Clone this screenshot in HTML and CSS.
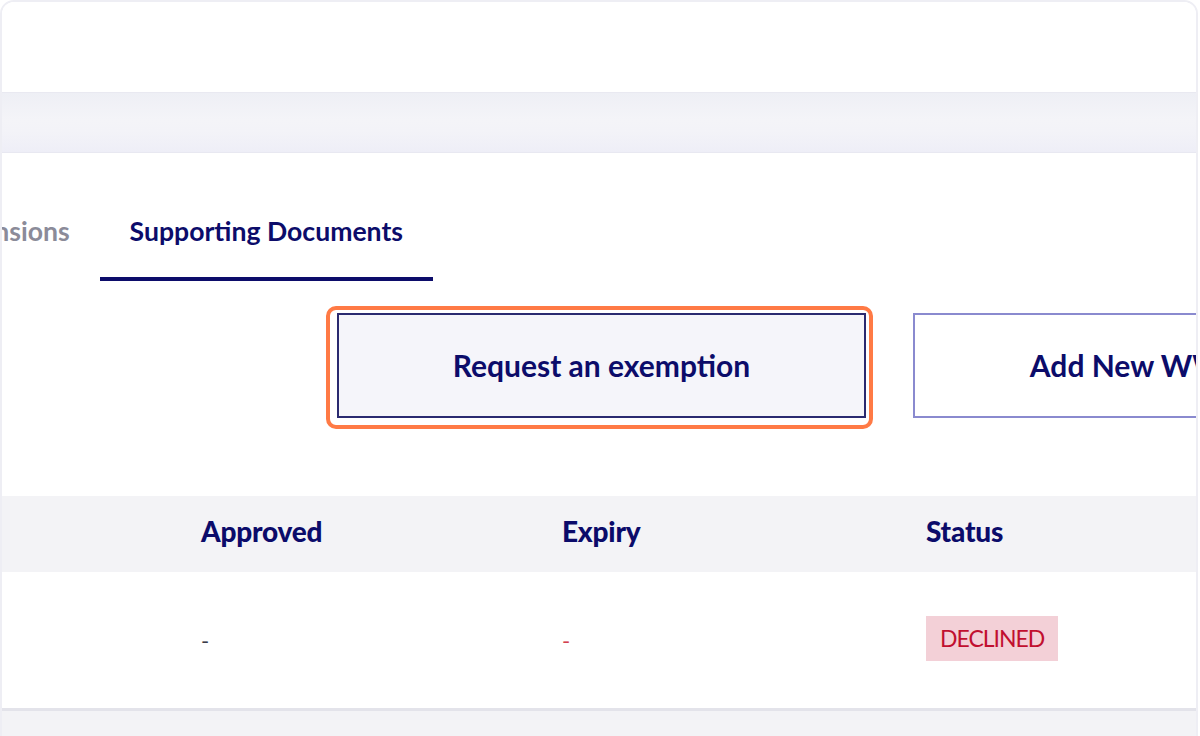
FILE: index.html
```html
<!DOCTYPE html>
<html lang="en">
<head>
<meta charset="utf-8">
<title>Supporting Documents</title>
<link rel="stylesheet" href="styles.css">
</head>
<body>
<div class="frame">
  <div class="topbar"></div>
  <div class="band"></div>
  <div class="content">
    <nav class="tabs">
      <div class="tab">Extensions</div>
      <div class="tab tab-active">Supporting Documents</div>
    </nav>
    <div class="actions">
      <div class="highlight">
        <button class="btn btn-primary" type="button">Request an exemption</button>
      </div>
      <button class="btn btn-outline" type="button">Add New WWCC Check</button>
    </div>
    <div class="table">
      <div class="thead">
        <div class="cell"></div>
        <div class="cell">Approved</div>
        <div class="cell">Expiry</div>
        <div class="cell">Status</div>
      </div>
      <div class="trow">
        <div class="cell"></div>
        <div class="cell dash">-</div>
        <div class="cell dash dash-red">-</div>
        <div class="cell"><span class="badge">DECLINED</span></div>
      </div>
    </div>
    <div class="footer-band"></div>
  </div>
</div>
</body>
</html>
```
FILE: styles.css
```css
html, body {
  margin: 0;
  padding: 0;
  background: #ffffff;
}
body {
  font-family: "Lato", "Open Sans", sans-serif;
  width: 1200px;
  height: 736px;
  overflow: hidden;
}
.frame {
  width: 1194px;
  height: 760px;
  border: 2px solid #eeeef4;
  border-radius: 14px;
  overflow: hidden;
  background: #ffffff;
}
.topbar {
  height: 90px;
  background: #ffffff;
}
.band {
  height: 59px;
  border-top: 1px solid #e9e9f1;
  border-bottom: 1px solid #e8e8f1;
  background: linear-gradient(#eeeff5 0%, #f4f4f8 45%, #f3f3f8 65%, #eeeef7 100%);
}
.content {
  display: flex;
  flex-direction: column;
}
.tabs {
  display: flex;
  justify-content: flex-end;
  width: 431px;
  margin-top: 2px;
}
.tab {
  flex-shrink: 0;
  padding: 61px 30px 31px;
  font-size: 26.6px;
  line-height: 30px;
  font-weight: 700;
  color: #8b8b99;
  border-bottom: 4px solid transparent;
  white-space: nowrap;
}
.tab-active {
  color: #0c0c6a;
  border-bottom-color: #0c0c6a;
}
.actions {
  display: flex;
  gap: 47px;
  margin-top: 32px;
  margin-left: 335px;
}
.highlight {
  position: relative;
}
.highlight::after {
  content: "";
  position: absolute;
  top: -7px;
  bottom: -11px;
  left: -11px;
  right: -7px;
  border: 4px solid #ff7a45;
  border-radius: 10px;
  pointer-events: none;
}
.btn {
  width: 529px;
  height: 105px;
  font-family: "Lato", sans-serif;
  font-size: 30px;
  font-weight: 700;
  color: #0c0c6a;
  display: flex;
  align-items: center;
  justify-content: center;
  flex-shrink: 0;
  white-space: nowrap;
  cursor: pointer;
  padding: 0 0 2px;
}
.btn-primary {
  background: #f5f5fa;
  border: 2px solid #2a2a70;
}
.btn-outline {
  width: 557px;
  background: #ffffff;
  border: 2px solid #8a8acf;
}
.table {
  margin-top: 78px;
}
.thead, .trow {
  display: grid;
  grid-template-columns: 199px 361px 364px 1fr;
  align-items: center;
}
.thead {
  height: 76px;
  background: #f3f3f6;
}
.thead .cell {
  font-size: 28px;
  font-weight: 900;
  color: #0b0b6a;
  padding-bottom: 6px;
  letter-spacing: -0.2px;
}
.trow {
  height: 136px;
  border-bottom: 3px solid #e3e3ea;
}
.dash {
  font-size: 22px;
  color: #3a3a48;
}
.dash-red {
  color: #d2404f;
}
.badge {
  display: inline-block;
  background: #f3d0d7;
  color: #c10f2f;
  font-size: 23px;
  line-height: 27px;
  padding: 9px 14px;
  margin-bottom: 3px;
  letter-spacing: -1px;
}
.footer-band {
  height: 40px;
  background: #f3f3f6;
}
```
